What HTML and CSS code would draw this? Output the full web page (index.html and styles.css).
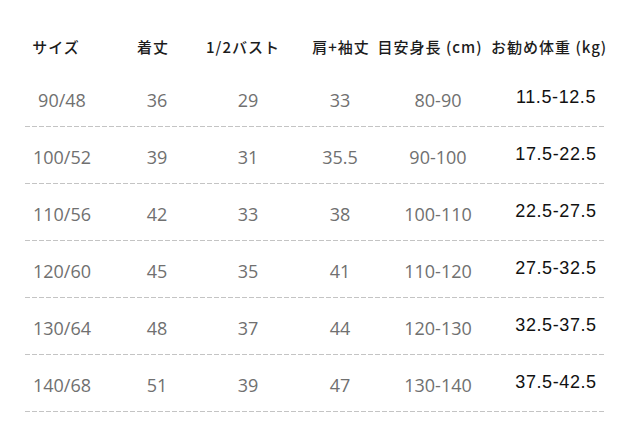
FILE: index.html
```html
<!DOCTYPE html>
<html lang="ja">
<head>
<meta charset="utf-8">
<title>サイズ表</title>
<link rel="stylesheet" href="styles.css">
</head>
<body>
<div class="chart">
  <div class="row head">
    <div class="cell"><span>サイズ</span></div>
    <div class="cell"><span>着丈</span></div>
    <div class="cell"><span>1/2バスト</span></div>
    <div class="cell"><span>肩+袖丈</span></div>
    <div class="cell"><span>目安身長 (cm)</span></div>
    <div class="cell"><span>お勧め体重 (kg)</span></div>
  </div>
  <div class="row data">
    <div class="cell"><span>90/48</span></div>
    <div class="cell"><span>36</span></div>
    <div class="cell"><span>29</span></div>
    <div class="cell"><span>33</span></div>
    <div class="cell"><span>80-90</span></div>
    <div class="cell wt"><span>11.5-12.5</span></div>
  </div>
  <div class="row data">
    <div class="cell"><span>100/52</span></div>
    <div class="cell"><span>39</span></div>
    <div class="cell"><span>31</span></div>
    <div class="cell"><span>35.5</span></div>
    <div class="cell"><span>90-100</span></div>
    <div class="cell wt"><span>17.5-22.5</span></div>
  </div>
  <div class="row data">
    <div class="cell"><span>110/56</span></div>
    <div class="cell"><span>42</span></div>
    <div class="cell"><span>33</span></div>
    <div class="cell"><span>38</span></div>
    <div class="cell"><span>100-110</span></div>
    <div class="cell wt"><span>22.5-27.5</span></div>
  </div>
  <div class="row data">
    <div class="cell"><span>120/60</span></div>
    <div class="cell"><span>45</span></div>
    <div class="cell"><span>35</span></div>
    <div class="cell"><span>41</span></div>
    <div class="cell"><span>110-120</span></div>
    <div class="cell wt"><span>27.5-32.5</span></div>
  </div>
  <div class="row data">
    <div class="cell"><span>130/64</span></div>
    <div class="cell"><span>48</span></div>
    <div class="cell"><span>37</span></div>
    <div class="cell"><span>44</span></div>
    <div class="cell"><span>120-130</span></div>
    <div class="cell wt"><span>32.5-37.5</span></div>
  </div>
  <div class="row data">
    <div class="cell"><span>140/68</span></div>
    <div class="cell"><span>51</span></div>
    <div class="cell"><span>39</span></div>
    <div class="cell"><span>47</span></div>
    <div class="cell"><span>130-140</span></div>
    <div class="cell wt"><span>37.5-42.5</span></div>
  </div>
</div>
</body>
</html>
```
FILE: styles.css
```css
html, body {
  margin: 0;
  padding: 0;
  background: #ffffff;
}

.chart {
  width: 581px;
  margin-left: 25px;
  padding-top: 23px;
}

.row {
  display: grid;
  grid-template-columns: 74px 116px 66px 118px 78px 1fr;
  align-items: center;
}

.cell {
  display: flex;
  justify-content: center;
  white-space: nowrap;
}

.head {
  height: 47px;
  font-family: "Noto Sans CJK JP", "Noto Sans", sans-serif;
  font-size: 15px;
  font-weight: 500;
  letter-spacing: 1px;
  color: #1c1c1c;
}

.head .cell:nth-child(1) { padding-right: 12px; }
.head .cell:nth-child(2) { padding-right: 8px; }
.head .cell:nth-child(3) { padding-right: 10px; }
.head .cell:nth-child(4) { padding-left: 2px; }
.head .cell:nth-child(5) { padding-right: 16px; }
.head .cell:nth-child(6) { padding-left: 14px; }

.data {
  height: 57px;
  box-sizing: border-box;
  padding-top: 2px;
  font-family: "Open Sans", sans-serif;
  font-size: 18px;
  font-weight: 500;
  color: #707070;
  background: repeating-linear-gradient(to right, #c4c4c4 0 5px, transparent 5px 7px) left bottom / 100% 1px no-repeat;
}

.data .wt {
  padding-left: 29px;
  font-family: "Liberation Sans", Arial, sans-serif;
  font-size: 18px;
  font-weight: 400;
  letter-spacing: 0.6px;
  color: #111111;
  margin-top: -4px;
}
```
